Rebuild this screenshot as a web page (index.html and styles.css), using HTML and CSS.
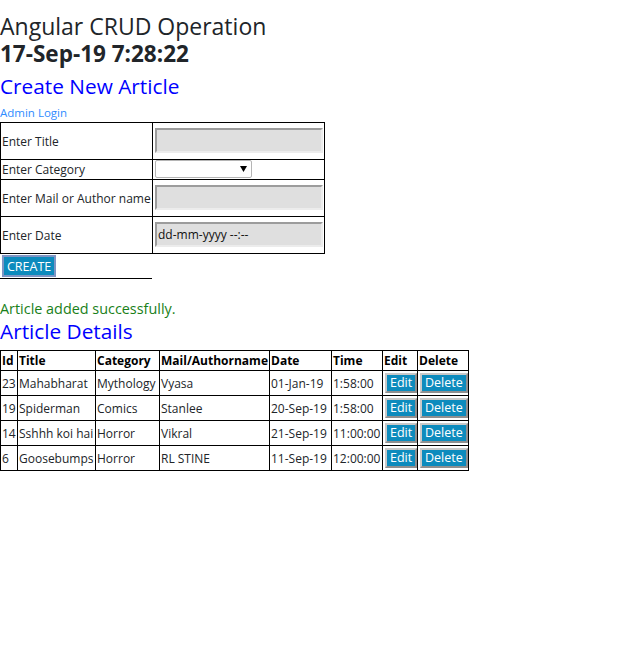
FILE: index.html
```html
<!DOCTYPE html>
<html lang="en">
<head>
<meta charset="utf-8">
<title>Angular CRUD Operation</title>
<link rel="stylesheet" href="styles.css">
</head>
<body>
<div class="title">Angular CRUD Operation</div>
<div class="clock">17-Sep-19 7:28:22</div>
<div class="section create-heading">Create New Article</div>
<div class="admin"><a class="admin-link" href="#">Admin Login</a></div>
<table class="form-table">
  <colgroup><col class="fcol-label"><col class="fcol-field"></colgroup>
  <tr>
    <td>Enter Title</td>
    <td><div class="field"></div></td>
  </tr>
  <tr>
    <td>Enter Category</td>
    <td><div class="select"><svg class="arrow" width="7" height="6" viewBox="0 0 7 6"><path d="M0 0H7L3.5 6Z" fill="#000"/></svg></div></td>
  </tr>
  <tr>
    <td>Enter Mail or Author name</td>
    <td><div class="field"></div></td>
  </tr>
  <tr>
    <td>Enter Date</td>
    <td><div class="field">dd-mm-yyyy --:--</div></td>
  </tr>
</table>
<div class="actions"><button class="btn btn-create">CREATE</button></div>
<div class="success">Article added successfully.</div>
<div class="section details-heading">Article Details</div>
<table class="data">
  <colgroup>
    <col class="c-id"><col class="c-title"><col class="c-cat"><col class="c-mail">
    <col class="c-date"><col class="c-time"><col class="c-edit"><col class="c-del">
  </colgroup>
  <thead>
    <tr><th>Id</th><th>Title</th><th>Category</th><th>Mail/Authorname</th><th>Date</th><th>Time</th><th>Edit</th><th>Delete</th></tr>
  </thead>
  <tbody>
    <tr><td>23</td><td>Mahabharat</td><td>Mythology</td><td>Vyasa</td><td>01-Jan-19</td><td>1:58:00</td><td><button class="btn btn-row">Edit</button></td><td><button class="btn btn-row">Delete</button></td></tr>
    <tr><td>19</td><td>Spiderman</td><td>Comics</td><td>Stanlee</td><td>20-Sep-19</td><td>1:58:00</td><td><button class="btn btn-row">Edit</button></td><td><button class="btn btn-row">Delete</button></td></tr>
    <tr><td>14</td><td>Sshhh koi hai</td><td>Horror</td><td>Vikral</td><td>21-Sep-19</td><td>11:00:00</td><td><button class="btn btn-row">Edit</button></td><td><button class="btn btn-row">Delete</button></td></tr>
    <tr><td>6</td><td>Goosebumps</td><td>Horror</td><td>RL STINE</td><td>11-Sep-19</td><td>12:00:00</td><td><button class="btn btn-row">Edit</button></td><td><button class="btn btn-row">Delete</button></td></tr>
  </tbody>
</table>
</body>
</html>
```

FILE: styles.css
```css
html, body {
  margin: 0;
  padding: 0;
  background: #fff;
}
body {
  font-family: "Open Sans", "Noto Sans", sans-serif;
  color: #212529;
  font-size: 12px;
}
.title {
  font-size: 23px;
  line-height: 28px;
  padding-top: 12px;
}
.clock {
  font-size: 22.5px;
  font-weight: bold;
  line-height: 28px;
}
.section {
  color: #0000ff;
  font-size: 20.8px;
}
.create-heading {
  margin-top: 3px;
  line-height: 30px;
}
.admin {
  padding-top: 3px;
  line-height: 18px;
  font-size: 11.5px;
}
.admin-link {
  color: #2f8cff;
  text-decoration: none;
}
.form-table {
  border-collapse: collapse;
  table-layout: fixed;
  width: 325px;
}
.fcol-label { width: 152px; }
.form-table td {
  border: 1px solid #000;
  padding: 0 1px;
  line-height: 19px;
  font-size: 12px;
  white-space: nowrap;
  vertical-align: middle;
}
.field {
  box-sizing: border-box;
  width: 168px;
  height: 25px;
  margin: 5px 0 6px 1px;
  background: #dfdfdf;
  border: 2px solid;
  border-color: #9c9c9c #ececec #ececec #9c9c9c;
  font-size: 12px;
  line-height: 21px;
  padding-left: 1px;
  color: #111;
}
.select {
  box-sizing: border-box;
  width: 97px;
  height: 18px;
  margin: 0 0 1px 1px;
  border: 1px solid #b5b5b5;
  border-radius: 2px;
  background: #fff;
  display: flex;
  align-items: center;
  justify-content: flex-end;
  padding-right: 4px;
}
.actions {
  display: flex;
  width: 152px;
  border-bottom: 1px solid #000;
  padding: 1px 0 1px 2px;
  box-sizing: border-box;
}
.btn {
  font-family: inherit;
  color: #fff;
  background: #0d8bbd;
  cursor: pointer;
}
.btn-create {
  height: 22px;
  padding: 0 3px;
  font-size: 12.5px;
  border: 2px solid #7e95c4;
}
.success {
  color: #198019;
  font-size: 14.4px;
  line-height: 20px;
  margin-top: 20px;
}
.details-heading {
  line-height: 24px;
  margin-bottom: 7px;
}
.data {
  border-collapse: collapse;
  table-layout: fixed;
  width: 469px;
}
.c-id { width: 17px; }
.c-title { width: 78px; }
.c-cat { width: 64px; }
.c-mail { width: 110px; }
.c-date { width: 62px; }
.c-time { width: 51px; }
.c-edit { width: 35px; }
.c-del { width: 51px; }
.data th, .data td {
  border: 1px solid #000;
  padding: 1px;
  font-size: 12px;
  line-height: 17px;
  text-align: left;
  white-space: nowrap;
  overflow: hidden;
  vertical-align: middle;
}
.data th {
  font-weight: bold;
  color: #000;
}
.btn-row {
  height: 20px;
  margin: 1px 0 1px 1px;
  padding: 0 3px;
  font-size: 12.5px;
  line-height: 16px;
  border: 2px solid;
  border-color: #c9c9c9 #8f8f8f #8f8f8f #c9c9c9;
}
```
